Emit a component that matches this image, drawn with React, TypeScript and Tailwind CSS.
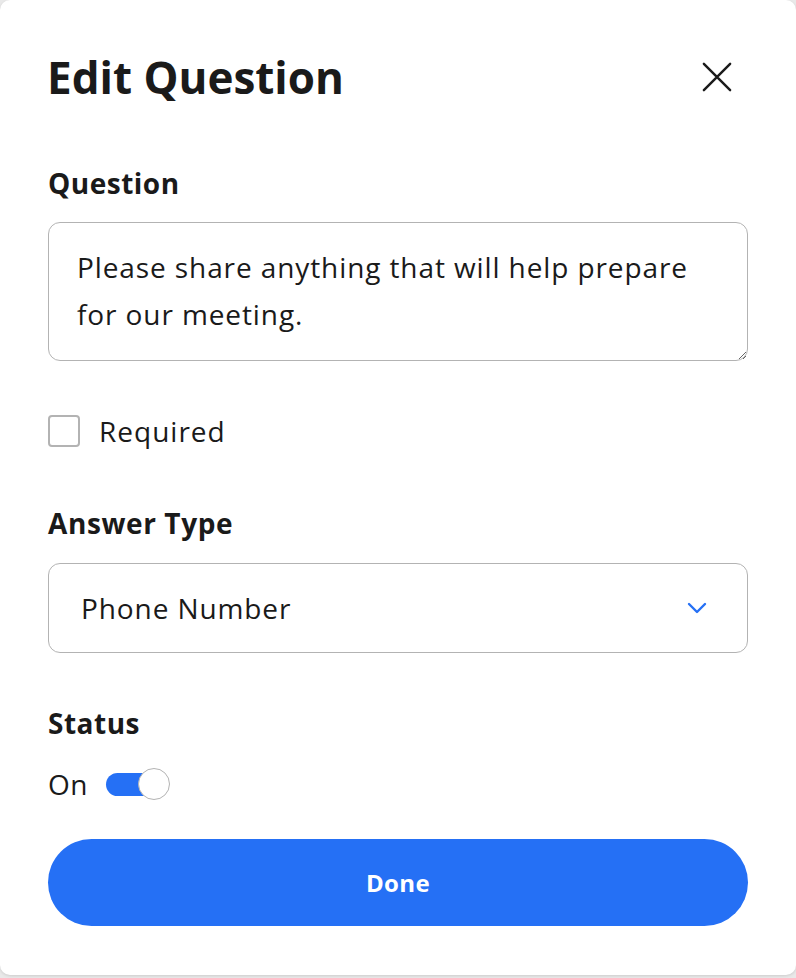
import React from "react";

export default function App() {
  const font = { fontFamily: "'Open Sans', 'Liberation Sans', sans-serif" };
  return (
    <div className="w-[796px] h-[978px] bg-[#e9e9e9]" style={font}>
      <div className="w-[796px] h-[975px] bg-white rounded-[10px] shadow-[0_1px_3px_rgba(0,0,0,0.12)] px-[48px] pt-[53px] text-[#1a1a1a]">
        <div className="flex items-center justify-between h-[48px]">
          <h1 className="text-[44px] font-bold leading-[48px] -ml-[1px]">Edit Question</h1>
          <button className="w-[30px] h-[30px] mr-[16px] flex items-center justify-center">
            <svg width="32" height="32" viewBox="0 0 32 32" fill="none" stroke="#1a1a1a" strokeWidth="2.6" strokeLinecap="round">
              <path d="M2 2L30 30M30 2L2 30" />
            </svg>
          </button>
        </div>

        <div className="mt-[67px] text-[28px] font-bold leading-[30px] tracking-[0.5px]">Question</div>
        <textarea
          className="mt-[24px] block w-[700px] h-[139px] border-[1.5px] border-[#b3b3b3] rounded-[12px] pl-[28px] pr-[30px] pt-[21px] text-[28px] leading-[47px] tracking-[0.9px] text-[#1a1a1a] outline-none resize-y"
          style={font}
          defaultValue="Please share anything that will help prepare for our meeting."
        />

        <div className="mt-[54px] flex items-center h-[32px]">
          <div className="w-[32px] h-[32px] border-2 border-[#b3b3b3] rounded-[4px]" />
          <span className="ml-[19px] text-[28px] leading-[32px] tracking-[1px]">Required</span>
        </div>

        <div className="mt-[61px] text-[28px] font-bold leading-[30px] tracking-[0.6px]">Answer Type</div>
        <div className="mt-[25px] w-[700px] h-[90px] border-[1.5px] border-[#b3b3b3] rounded-[12px] pl-[32px] pr-[40px] flex items-center justify-between">
          <span className="text-[28px] tracking-[0.9px]">Phone Number</span>
          <svg width="20" height="12" viewBox="0 0 20 12" fill="none" stroke="#2570f5" strokeWidth="2.4" strokeLinecap="round" strokeLinejoin="round">
            <path d="M2 2L10 10L18 2" />
          </svg>
        </div>

        <div className="mt-[55px] text-[28px] font-bold leading-[30px] tracking-[0.5px]">Status</div>
        <div className="mt-[29px] flex items-center h-[34px]">
          <span className="text-[28px] leading-[34px] tracking-[0.5px]">On</span>
          <div className="relative ml-[18px] w-[64px] h-[34px]">
            <div className="absolute left-0 top-[6px] w-[54px] h-[23px] rounded-full bg-[#2570f5]" />
            <div className="absolute left-[32px] top-[1px] w-[32px] h-[32px] rounded-full bg-white border-[1.5px] border-[#b3b3b3]" />
          </div>
        </div>

        <button className="mt-[38px] w-[700px] h-[87px] rounded-full bg-[#2570f5] text-white text-[24px] font-bold tracking-[0.4px]">
          Done
        </button>
      </div>
    </div>
  );
}
